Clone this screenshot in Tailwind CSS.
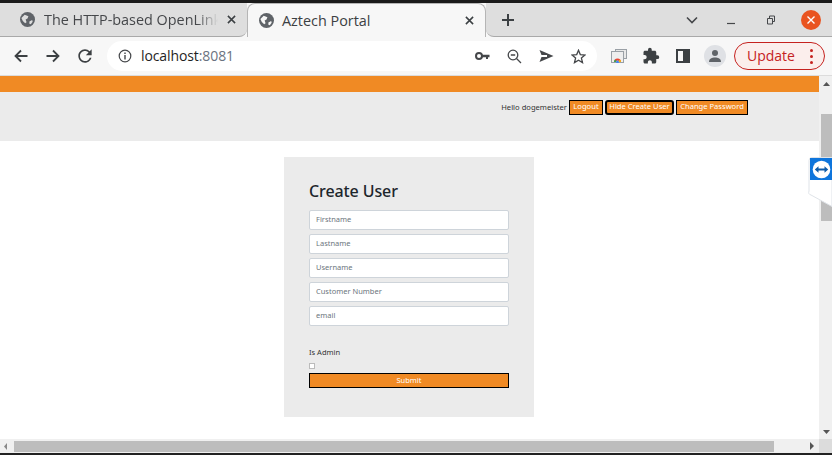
<!DOCTYPE html>
<html>
<head>
<script src="https://cdn.jsdelivr.net/npm/@tailwindcss/browser@4"></script>
</head>
<body class="w-[832px] h-[455px] overflow-hidden bg-white font-['Noto_Sans',sans-serif]">
<div class="flex flex-col w-[832px] h-[455px] relative">
  <div class="h-[3px] bg-[#1a1a1a] shrink-0"></div>
  <!-- tab strip -->
  <div class="h-[34px] shrink-0 bg-[#f7f7f7] flex items-stretch text-[#3c4043]">
    <div class="w-[247px] bg-[#dedede] border-b border-[#a9a9a9] rounded-br-[8px] flex items-center pl-[20px] gap-[9px] text-[14.4px] font-['Open_Sans',sans-serif] text-[#45474a] overflow-hidden">
      <svg class="w-[15px] h-[15px] shrink-0" viewBox="0 0 16 16"><circle cx="8" cy="8" r="8" fill="#5f6368"/><path d="M1.5 6.5 5 3 9 4.5 8 7 6 8 7 11 5.5 12 3 9.5ZM10 10 13 8.5 13.5 10.5 11.5 13 10 12.5Z" fill="#dedede"/></svg>
      <span class="w-[174px] shrink-0 whitespace-nowrap overflow-hidden [mask-image:linear-gradient(to_right,black_88%,transparent)]">The HTTP-based OpenLink</span>
      <svg class="w-[9px] h-[9px] shrink-0 ml-[0px]" viewBox="0 0 10 10"><path d="M1 1 9 9M9 1 1 9" stroke="#3c4043" stroke-width="1.7"/></svg>
    </div>
    <div class="w-[239px] bg-[#f7f7f7] rounded-t-[8px] border-x border-t border-[#b5b5b5] flex items-center pl-[11px] pr-[11px] gap-[8px] text-[14.4px] font-['Open_Sans',sans-serif] text-[#3c4043]">
      <svg class="w-[15px] h-[15px] shrink-0" viewBox="0 0 16 16"><circle cx="8" cy="8" r="8" fill="#5f6368"/><path d="M1.5 6.5 5 3 9 4.5 8 7 6 8 7 11 5.5 12 3 9.5ZM10 10 13 8.5 13.5 10.5 11.5 13 10 12.5Z" fill="#f7f7f7"/></svg>
      <span class="grow whitespace-nowrap">Aztech Portal</span>
      <svg class="w-[9px] h-[9px] shrink-0" viewBox="0 0 10 10"><path d="M1 1 9 9M9 1 1 9" stroke="#3c4043" stroke-width="1.7"/></svg>
    </div>
    <div class="grow bg-[#dedede] border-b border-[#a9a9a9] rounded-bl-[8px] flex items-center pl-[15px]">
      <svg class="w-[14px] h-[14px]" viewBox="0 0 14 14"><path d="M7 1V13M1 7H13" stroke="#3c4043" stroke-width="2"/></svg>
      <div class="grow flex items-center justify-end">
        <svg class="w-[12px] h-[8px] mr-[28px]" viewBox="0 0 12 8"><path d="M1 1.5 6 6.5 11 1.5" fill="none" stroke="#45474a" stroke-width="1.6"/></svg>
        <svg class="w-[10px] h-[10px] mr-[30px]" viewBox="0 0 10 10"><path d="M1 8.5H9" stroke="#45474a" stroke-width="1.2"/></svg>
        <svg class="w-[10px] h-[10px] mr-[25px]" viewBox="0 0 10 10"><path d="M1.5 3.5H6.5V9H1.5ZM3.5 3V1H8.5V6.5H7" fill="none" stroke="#45474a" stroke-width="1"/></svg>
        <div class="w-[20px] h-[20px] rounded-full bg-[#e95420] flex items-center justify-center mr-[11px]">
          <svg class="w-[10px] h-[10px]" viewBox="0 0 10 10"><path d="M1.5 1.5 8.5 8.5M8.5 1.5 1.5 8.5" stroke="#fff" stroke-width="1.4"/></svg>
        </div>
      </div>
    </div>
  </div>
  <!-- toolbar -->
  <div class="h-[39px] shrink-0 bg-[#f7f7f7] flex items-center border-b border-[#dcdcdc]">
    <div class="flex items-center pl-[14px] gap-[18px] w-[107px]">
      <svg class="w-[14px] h-[14px] shrink-0" viewBox="0 0 14 14"><path d="M13.5 7H1.5M7 1.5 1.5 7 7 12.5" fill="none" stroke="#3c4043" stroke-width="1.8"/></svg>
      <svg class="w-[14px] h-[14px] shrink-0" viewBox="0 0 14 14"><path d="M.5 7H12.5M7 1.5 12.5 7 7 12.5" fill="none" stroke="#3c4043" stroke-width="1.8"/></svg>
      <svg class="w-[20px] h-[20px] shrink-0 -mx-[3px]" viewBox="0 0 24 24"><path d="M17.65 6.35A7.958 7.958 0 0 0 12 4c-4.42 0-7.99 3.58-7.99 8s3.57 8 7.99 8c3.73 0 6.84-2.55 7.73-6h-2.08A5.99 5.99 0 0 1 12 18c-3.31 0-6-2.69-6-6s2.69-6 6-6c1.66 0 3.14.69 4.22 1.78L13 11h7V4l-2.35 2.35z" fill="#3c4043"/></svg>
    </div>
    <div class="w-[490px] h-[30px] bg-white rounded-full flex items-center pl-[11px] pr-[11px]">
      <svg class="w-[14px] h-[14px] shrink-0" viewBox="0 0 14 14"><circle cx="7" cy="7" r="5.8" fill="none" stroke="#45474a" stroke-width="1.2"/><path d="M7 6V10.5M7 3.5V5" stroke="#45474a" stroke-width="1.4"/></svg>
      <span class="ml-[9px] pb-[1px] text-[14px] font-['Open_Sans',sans-serif] text-[#1f1f1f] tracking-[-0.1px] grow">localhost<span class="text-[#6b7280]">:8081</span></span>
      <svg class="w-[15px] h-[10px] mr-[17px]" viewBox="0 0 15 10"><circle cx="4" cy="5" r="3" fill="none" stroke="#45474a" stroke-width="2"/><path d="M6.5 3.8H14.5V6.2H13V8H11V6.2H6.5Z" fill="#45474a"/></svg>
      <svg class="w-[15px] h-[15px] mr-[17px]" viewBox="0 0 15 15"><circle cx="6" cy="6" r="4.8" fill="none" stroke="#45474a" stroke-width="1.3"/><path d="M9.5 9.5 14 14M3.8 6H8.2" stroke="#45474a" stroke-width="1.3"/></svg>
      <svg class="w-[15px] h-[12px] mr-[17px]" viewBox="0 0 15 12"><path d="M.5 0 14.5 6 .5 12 2.5 7H8V5H2.5Z" fill="#45474a"/></svg>
      <svg class="w-[15px] h-[15px]" viewBox="0 0 15 15"><path d="M7.5 1.3 9.3 5.6 14 6 10.4 9 11.5 13.6 7.5 11.2 3.5 13.6 4.6 9 1 6 5.7 5.6Z" fill="none" stroke="#45474a" stroke-width="1.3"/></svg>
    </div>
    <svg class="w-[16px] h-[14px] ml-[14px] shrink-0" viewBox="0 0 16 14"><rect x="4.5" y=".5" width="11" height="9" fill="#e8e8e8" stroke="#9aa0a6"/><rect x=".5" y="2.5" width="12" height="11" fill="#eeeeee" stroke="#9aa0a6"/><path d="M3 13A3.5 3.5 0 0 1 10 13H8A1.5 1.5 0 0 0 5 13Z" fill="#ea4335"/><path d="M3 13A3.5 3.5 0 0 1 4 10.5L5.5 12A1.5 1.5 0 0 0 5 13Z" fill="#34a853"/><path d="M10 13H8A1.5 1.5 0 0 0 7.5 12L9 10.5A3.5 3.5 0 0 1 10 13Z" fill="#fbbc05"/><circle cx="6.5" cy="13" r="1.4" fill="#4285f4"/></svg>
    <svg class="w-[18px] h-[18px] ml-[15px] shrink-0" viewBox="0 0 24 24"><path d="M20.5 11H19V7c0-1.1-.9-2-2-2h-4V3.500a2.500 2.500 0 0 0-5 0V5H4c-1.100 0-1.990.900-1.990 2v3.800H3.500c1.490 0 2.700 1.210 2.700 2.700s-1.210 2.700-2.700 2.700H2V20c0 1.100.900 2 2 2h3.800v-1.500c0-1.490 1.210-2.700 2.700-2.700 1.490 0 2.700 1.210 2.700 2.700V22H17c1.100 0 2-.900 2-2v-4h1.500a2.500 2.500 0 0 0 0-5z" fill="#3c4043"/></svg>
    <div class="w-[14px] h-[14px] ml-[16px] shrink-0 border-[2px] border-[#3c4043] flex justify-end"><div class="w-[5px] bg-[#3c4043]"></div></div>
    <div class="w-[22px] h-[22px] ml-[14px] rounded-full bg-[#dfe1e5] shrink-0 flex items-center justify-center">
      <svg class="w-[14px] h-[14px]" viewBox="0 0 14 14"><circle cx="7" cy="4" r="3" fill="#5f6368"/><path d="M1 13C1 9.500 4 8.500 7 8.500S13 9.500 13 13Z" fill="#5f6368"/></svg>
    </div>
    <div class="w-[91px] h-[28px] ml-[8px] rounded-full border border-[#c5221f] bg-[#fbeeec] flex items-center pl-[12px] pr-[11px] justify-between shrink-0">
      <span class="text-[14px] pb-[1px] font-['Open_Sans',sans-serif] text-[#c5221f]">Update</span>
      <span class="flex flex-col gap-[3px]"><span class="w-[3px] h-[3px] rounded-full bg-[#c5221f]"></span><span class="w-[3px] h-[3px] rounded-full bg-[#c5221f]"></span><span class="w-[3px] h-[3px] rounded-full bg-[#c5221f]"></span></span>
    </div>
  </div>
  <!-- viewport -->
  <div class="flex grow min-h-0 relative">
    <div class="w-[819px] shrink-0 flex flex-col overflow-hidden">
      <div class="grow min-h-0 flex flex-col">
        <div class="h-[16px] bg-[#f08a24] shrink-0"></div>
        <div class="h-[49px] bg-[#ebebeb] shrink-0 flex items-start justify-end pr-[71px] pt-[8px] gap-[2px] text-[7.6px] leading-[11px]">
          <span class="text-[#333] mt-[2px]">Hello dogemeister</span>
          <span class="h-[15px] w-[34px] justify-center bg-[#f08a24] border border-black text-white flex items-center pb-[2px]">Logout</span>
          <span class="h-[15px] w-[69px] justify-center bg-[#f08a24] border-[2px] border-black rounded-[3px] text-white flex items-center pb-[2px] whitespace-nowrap">Hide Create User</span>
          <span class="h-[15px] w-[72px] justify-center bg-[#f08a24] border border-black text-white flex items-center pb-[2px] whitespace-nowrap">Change Password</span>
        </div>
        <div class="flex justify-center pt-[16px] pr-[1px]">
          <div class="w-[250px] h-[260px] bg-[#ebebeb] pt-[23px] px-[25px] flex flex-col">
            <h1 class="text-[16px] leading-[22px] font-medium text-[#1d262b] tracking-[-0.1px]">Create User</h1>
            <div class="mt-[8px] flex flex-col gap-[4px]">
              <div class="h-[20px] bg-white border border-[#ced4da] rounded-[2px] pl-[6px] text-[7.5px] leading-[16px] text-[#6c757d]">Firstname</div>
              <div class="h-[20px] bg-white border border-[#ced4da] rounded-[2px] pl-[6px] text-[7.5px] leading-[16px] text-[#6c757d]">Lastname</div>
              <div class="h-[20px] bg-white border border-[#ced4da] rounded-[2px] pl-[6px] text-[7.5px] leading-[16px] text-[#6c757d]">Username</div>
              <div class="h-[20px] bg-white border border-[#ced4da] rounded-[2px] pl-[6px] text-[7.5px] leading-[16px] text-[#6c757d]">Customer Number</div>
              <div class="h-[20px] bg-white border border-[#ced4da] rounded-[2px] pl-[6px] text-[7.5px] leading-[16px] text-[#6c757d]">email</div>
            </div>
            <div class="mt-[21px] text-[7.5px] leading-[11px] text-[#333]">Is Admin</div>
            <div class="mt-[5px] w-[6px] h-[6px] bg-white border border-[#bbb]"></div>
            <div class="mt-[4px] h-[15px] bg-[#f08a24] border border-black text-white text-[7.5px] leading-[12px] text-center">Submit</div>
          </div>
        </div>
      </div>
      <!-- horizontal scrollbar -->
      <div class="h-[14px] shrink-0 bg-[#f0f0f0] flex items-center">
        <svg class="w-[14px] h-[7px] shrink-0" viewBox="0 0 14 7"><path d="M4 3.500 7 0V7Z" fill="#888"/></svg>
        <div class="w-[760px] h-[11px] bg-[#bdbdbd]"></div>
        <svg class="w-[45px] h-[8px] shrink-0" viewBox="0 0 45 8"><path d="M36 0 40 4 36 8Z" fill="#555"/></svg>
      </div>
    </div>
    <!-- vertical scrollbar -->
    <div class="w-[13px] shrink-0 bg-[#f0f0f0] flex flex-col items-end">
      <div class="h-[38px] w-full shrink-0 flex justify-center pt-[6px] pl-[1px]">
        <svg class="w-[7px] h-[4px]" viewBox="0 0 7 4"><path d="M3.500 0 7 4H0Z" fill="#555"/></svg>
      </div>
      <div class="h-[107px] w-[11px] bg-[#bdbdbd] shrink-0"></div>
      <div class="grow w-full flex justify-center items-end pb-[5px] pl-[1px]">
        <svg class="w-[7px] h-[4px]" viewBox="0 0 7 4"><path d="M0 0H7L3.500 4Z" fill="#555"/></svg>
      </div>
      <div class="h-[14px] w-full shrink-0 bg-[#dcdcdc]"></div>
    </div>
    <!-- TeamViewer tab -->
    <div class="absolute left-[808px] top-[81px] w-[24px] h-[50px]">
      <svg class="absolute inset-0 w-[24px] h-[50px]" viewBox="0 0 24 50"><path d="M24 .5H4A3 3 0 0 0 1 3.500V34A3 3 0 0 0 3 38L24 49.500Z" fill="#fff" stroke="#dfe3e8"/></svg>
      <div class="absolute left-[2px] top-[1px] w-[22px] h-[22px] bg-[#0e75dc] flex items-center justify-center">
        <svg class="w-[19px] h-[19px]" viewBox="0 0 19 19"><circle cx="9.500" cy="9.500" r="8.800" fill="#fff"/><path d="M2.800 9.500 6.500 6.300V8.400H12.500V6.300L16.200 9.500 12.500 12.700V10.600H6.500V12.700Z" fill="#0e5ba8"/></svg>
      </div>
    </div>
  </div>
  <div class="h-[2px] bg-[#222] shrink-0"></div>
</div>
</body>
</html>
